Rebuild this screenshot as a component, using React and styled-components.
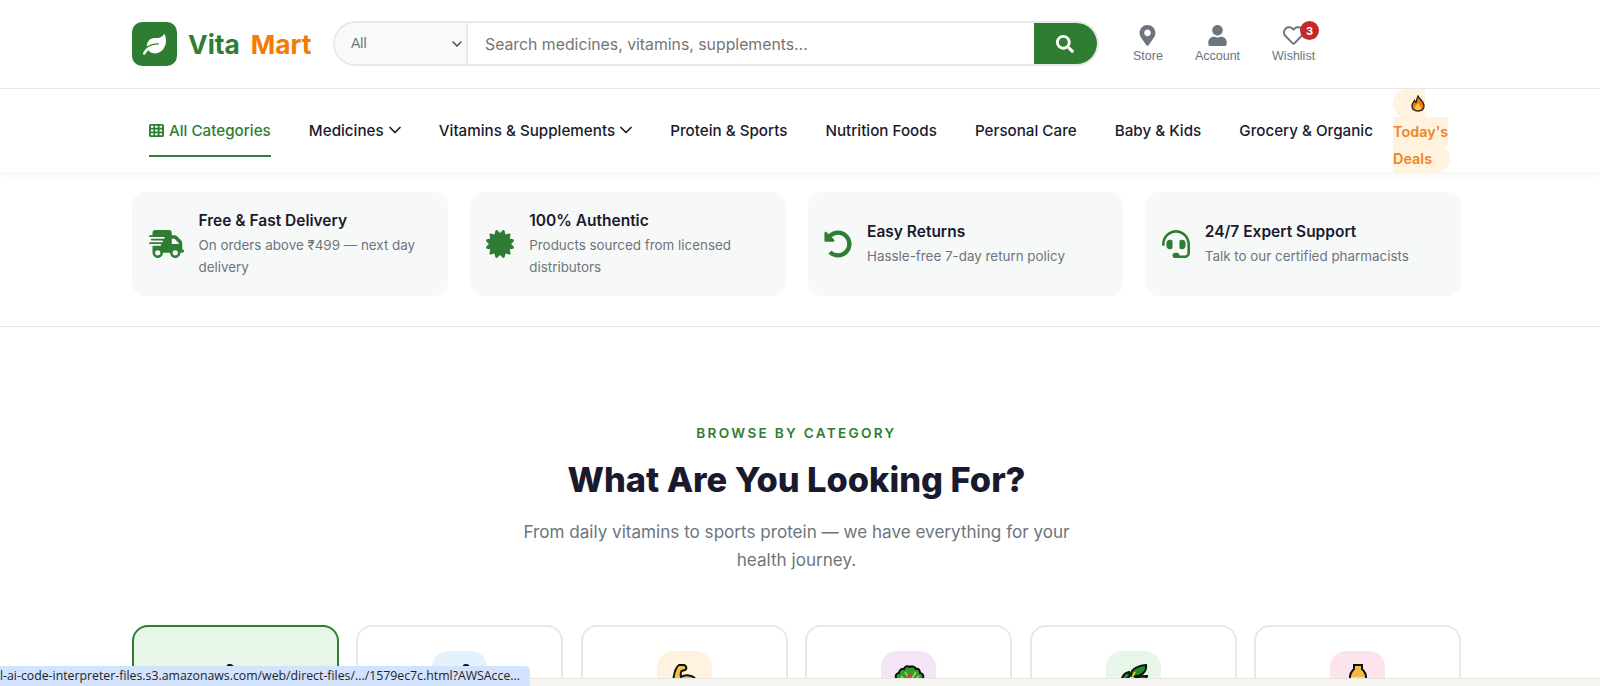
import styled, { createGlobalStyle } from "styled-components"
import { FaLeaf, FaMapMarkerAlt, FaUser, FaRegHeart, FaSearch, FaCertificate, FaUndoAlt, FaHeadset } from "react-icons/fa"
import { FaTruckFast, FaTableCells } from "react-icons/fa6"
import { ChevronDown } from "lucide-react"

const GlobalStyle = createGlobalStyle`
  * {
    box-sizing: border-box;
  }
  html, body {
    margin: 0;
    height: 686px;
    overflow: hidden;
    background: #fff;
    font-family: Inter, "Liberation Sans", sans-serif;
    color: #1a1a2e;
  }
`
const Page = styled.div`
  position: relative;
  height: 686px;
  overflow: hidden;
`
const Header = styled.header`
  position: relative;
  z-index: 1;
  height: 89px;
  background: #fff;
  border-bottom: 1px solid #e8e8e8;
`
const HeaderRow = styled.div`
  display: flex;
  align-items: flex-start;
  width: 1336px;
  margin-left: 132px;
  padding-top: 21px;
`
const Logo = styled.div`
  display: flex;
  align-items: center;
  width: 201px;
  gap: 11px;
  margin-top: 1px;
`
const LogoMark = styled.div`
  width: 45px;
  height: 44px;
  border-radius: 10px;
  background: #2e7d32;
  color: #fff;
  display: flex;
  align-items: center;
  justify-content: center;
  font-size: 23px;
`
const LogoText = styled.div`
  display: flex;
  gap: 11px;
  font-size: 26.3px;
  font-weight: 700;
  color: #2e7d32;
  span:last-child {
    color: #f57c00;
  }
`
const Search = styled.div`
  display: flex;
  width: 766px;
  height: 45px;
  border: 2px solid #e8e8e8;
  border-radius: 24px;
  overflow: hidden;
`
const SearchSelect = styled.div`
  width: 133px;
  background: #f8f9f9;
  border-right: 2px solid #e8e8e8;
  display: flex;
  align-items: center;
  justify-content: space-between;
  padding: 0 1px 2px 16px;
  font-size: 14px;
  color: #6c757d;
  font-family: "Liberation Sans", Arial, sans-serif;
  svg {
    color: #444;
    margin-top: 2px;
  }
`
const SearchInput = styled.div`
  flex: 1;
  display: flex;
  align-items: center;
  padding: 1px 0 0 17px;
  font-size: 15.8px;
  color: #757575;
`
const SearchButton = styled.div`
  width: 65px;
  margin: -2px;
  padding-right: 3px;
  background: #2e7d32;
  color: #fff;
  display: flex;
  align-items: center;
  justify-content: center;
  font-size: 18px;
`
const HeaderActions = styled.div`
  display: flex;
  margin-left: 34px;
  gap: 32px;
`
const Action = styled.div`
  position: relative;
  display: flex;
  flex-direction: column;
  align-items: center;
  gap: 3px;
  font-family: "Liberation Sans", Arial, sans-serif;
  font-size: 12.5px;
  color: #6c757d;
  svg {
    font-size: 21px;
    color: #6c757d;
    margin-top: 4px;
  }
`
const Badge = styled.span`
  position: absolute;
  top: 0;
  right: -4px;
  width: 19px;
  height: 19px;
  border-radius: 50%;
  background: #c62828;
  color: #fff;
  font-size: 11px;
  font-weight: 700;
  display: flex;
  align-items: center;
  justify-content: center;
  font-family: Inter, sans-serif;
`
const Nav = styled.nav`
  height: 83px;
  box-shadow: 0 2px 8px rgba(0, 0, 0, 0.05);
`
const NavRow = styled.div`
  display: flex;
  align-items: center;
  height: 83px;
  margin-left: 149px;
  gap: 38.1px;
`
const NavItem = styled.a`
  display: flex;
  align-items: center;
  gap: 5px;
  height: 52px;
  padding-top: 1px;
  font-size: 15.2px;
  font-weight: 500;
  white-space: nowrap;
  color: ${p => (p.$active ? "#2e7d32" : "#1a1a2e")};
  border-bottom: 2px solid ${p => (p.$active ? "#2e7d32" : "transparent")};
`
const NavChevron = styled(ChevronDown)`
  margin: 0 -4px 0 -4px;
`
const DealsBox = styled.div`
  margin: 2px 0 0 -18px;
  width: 56px;
  flex: none;
  line-height: 27.5px;
  font-size: 14.4px;
  font-weight: 600;
`
const Deals = styled.a`
  padding: 6px 18px;
  color: #ef8522;
  background: #fff3e0;
  border-radius: 20px;
  svg {
    vertical-align: -3px;
  }
`
const Features = styled.section`
  display: grid;
  grid-template-columns: repeat(4, 1fr);
  gap: 22px;
  width: 1329px;
  margin: 20px 0 0 132px;
`
const FeatureCard = styled.div`
  height: 104px;
  background: #f7f9f8;
  border-radius: 14px;
  display: flex;
  align-items: center;
  gap: 15px;
  padding: 0 16.5px;
`
const FeatureIcon = styled.div`
  color: #2e7d32;
  flex: none;
  display: flex;
  svg {
    width: ${p => p.$width}px;
    height: 28px;
  }
`
const FeatureTitle = styled.div`
  font-size: 15.5px;
  font-weight: 600;
  line-height: 22px;
  margin-bottom: 3px;
`
const FeatureText = styled.div`
  font-size: 13.4px;
  line-height: 21.5px;
  color: #6c757d;
`
const Divider = styled.hr`
  margin: 30px 0 0;
  border: 0;
  border-top: 1px solid #e8e8e8;
`
const Section = styled.section`
  width: 1329px;
  margin: 0 0 0 132px;
  padding-top: 96px;
  display: flex;
  flex-direction: column;
  align-items: center;
`
const Eyebrow = styled.div`
  font-size: 13.6px;
  font-weight: 600;
  letter-spacing: 2.3px;
  color: #2e7d32;
  line-height: 20px;
`
const Heading = styled.h2`
  margin: 12px 0 0;
  font-size: 34.4px;
  font-weight: 800;
  line-height: 50px;
`
const Sub = styled.p`
  margin: 13px 0 0;
  width: 580px;
  font-size: 17.1px;
  line-height: 27.5px;
  text-align: center;
  color: #6c757d;
`
const CategoryGrid = styled.div`
  display: grid;
  grid-template-columns: repeat(6, 1fr);
  gap: 17.6px;
  width: 100%;
  margin-top: 52px;
`
const CategoryCard = styled.div`
  height: 120px;
  border: 2px solid ${p => (p.$active ? "#2e7d32" : "#e8e8e8")};
  background: ${p => (p.$active ? "#e8f5e9" : "#fff")};
  border-radius: 16px;
  display: flex;
  justify-content: center;
  padding-top: 24px;
`
const CategoryIcon = styled.div`
  width: 55px;
  height: 55px;
  border-radius: 16px;
  background: ${p => p.$bg};
  display: flex;
  align-items: center;
  justify-content: center;
`
const BrowserBar = styled.div`
  position: absolute;
  left: 0;
  right: 0;
  bottom: 0;
  height: 8px;
  background: #f6f4f0;
  border-top: 1px solid #e8e6e2;
`
const UrlTip = styled.div`
  position: absolute;
  left: 0;
  bottom: 0;
  width: 530px;
  height: 20px;
  padding-right: 10px;
  background: #d3e3fd;
  border-top-right-radius: 5px;
  font-family: "Open Sans", "Liberation Sans", sans-serif;
  font-size: 12.3px;
  line-height: 20px;
  color: #1f1f1f;
  white-space: nowrap;
  display: flex;
  justify-content: flex-end;
`

const Flame = () => (
  <svg width="14" height="17" viewBox="0 0 14 17">
    <path d="M7 1C8 4 13 6 13 11C13 14.500 10.500 16 7 16S1 14.500 1 11C1 8.500 2.500 7 3.500 5.500C4 7 4.500 7.500 5 7.500C5.500 5.500 6 3 7 1Z" fill="#f57c00" stroke="#222" strokeWidth="1.300" />
    <path d="M7 8C8 10 10 11 10 13C10 14.500 8.500 15.200 7 15.200S4 14.500 4 13C4 11 6 10 7 8Z" fill="#ffc83d" />
  </svg>
)

// only the top of each emoji shows above the browser bar
const Pill = () => (
  <svg width="32" height="32" viewBox="0 0 32 32">
    <path d="M5 16C6 3 8 1 10.500 1S16 3 16 6V16Z" fill="#111" />
  </svg>
)
const Info = () => (
  <svg width="32" height="32" viewBox="0 0 32 32">
    <ellipse cx="22" cy="4" rx="3.500" ry="3" fill="#111" />
  </svg>
)
const Arm = () => (
  <svg width="32" height="32" viewBox="0 0 32 32">
    <path d="M5 32C4 20 6 5 11 2H16C19 3 19 6 17 7L13.500 8C12.500 10 12.500 12 13 14C16 12 20 12 23 13C27 14 29 18 29 23V32Z" fill="#f7c23a" stroke="#111" strokeWidth="2" />
  </svg>
)
const Salad = () => (
  <svg width="32" height="32" viewBox="0 0 32 32">
    <path d="M3 15C2 12 4 10 6 10C6 7 9 5 11 6C12 3 15 2.500 17 4C19 2.500 22 4 23 6C25 5 27 7 27 10C29 10 31 12 30 15V32H3Z" fill="#2f9e2f" stroke="#111" strokeWidth="2" />
    <path d="M12 9L15 14M23 9L19 15M8 13L11 16M26 13L23 16" stroke="#9ad854" strokeWidth="1.600" />
    <path d="M16 10L20 12L17 16L14 14Z" fill="#c8492c" />
  </svg>
)
const Herb = () => (
  <svg width="32" height="32" viewBox="0 0 32 32">
    <path d="M5 17C5 13 8 10 12 9C14 13 11 17 5 17Z" fill="#1e8c1e" stroke="#111" strokeWidth="2" />
    <path d="M14 13C13 8 18 3 29 2C30 8 25 15 14 13Z" fill="#1e8c1e" stroke="#111" strokeWidth="2" />
    <path d="M15 18C17 14 23 13 30 13C29 18 22 22 15 18Z" fill="#1e8c1e" stroke="#111" strokeWidth="2" />
    <path d="M10 24L18 9" stroke="#e4d34a" strokeWidth="1.600" />
  </svg>
)
const Bottle = () => (
  <svg width="32" height="32" viewBox="0 0 32 32">
    <path d="M12 2H20V6C22 8 24 10 24 14V30H8V14C8 10 10 8 12 6Z" fill="#f4b942" stroke="#111" strokeWidth="2" />
    <rect x="9" y="14" width="14" height="15" fill="#cfe0ee" />
  </svg>
)

const navItems = [
  { label: "Medicines", chevron: true },
  { label: "Vitamins & Supplements", chevron: true },
  { label: "Protein & Sports" },
  { label: "Nutrition Foods" },
  { label: "Personal Care" },
  { label: "Baby & Kids" },
  { label: "Grocery & Organic" },
]

const features = [
  { icon: <FaTruckFast />, width: 35, title: "Free & Fast Delivery", text: "On orders above ₹499 — next day delivery" },
  { icon: <FaCertificate />, width: 28, title: "100% Authentic", text: "Products sourced from licensed distributors" },
  { icon: <FaUndoAlt />, width: 28, title: "Easy Returns", text: "Hassle-free 7-day return policy" },
  { icon: <FaHeadset />, width: 28, title: "24/7 Expert Support", text: "Talk to our certified pharmacists" },
]

const categories = [
  { bg: "#e8f5e9", icon: <Pill />, active: true },
  { bg: "#e3f2fd", icon: <Info /> },
  { bg: "#fff3e0", icon: <Arm /> },
  { bg: "#f3e5f5", icon: <Salad /> },
  { bg: "#e8f5e9", icon: <Herb /> },
  { bg: "#fce4ec", icon: <Bottle /> },
]

export default function App() {
  return (
    <Page>
      <GlobalStyle />
      <Header>
        <HeaderRow>
          <Logo>
            <LogoMark><FaLeaf /></LogoMark>
            <LogoText><span>Vita</span><span>Mart</span></LogoText>
          </Logo>
          <Search>
            <SearchSelect>All <ChevronDown size={16} /></SearchSelect>
            <SearchInput>Search medicines, vitamins, supplements...</SearchInput>
            <SearchButton><FaSearch /></SearchButton>
          </Search>
          <HeaderActions>
            <Action><FaMapMarkerAlt />Store</Action>
            <Action><FaUser />Account</Action>
            <Action><FaRegHeart />Wishlist<Badge>3</Badge></Action>
          </HeaderActions>
        </HeaderRow>
      </Header>
      <Nav>
        <NavRow>
          <NavItem $active><FaTableCells size={15} />All Categories</NavItem>
          {navItems.map(item => (
            <NavItem key={item.label}>
              {item.label}
              {item.chevron && <NavChevron size={20} />}
            </NavItem>
          ))}
          <DealsBox>
            <Deals><Flame /> Today's Deals</Deals>
          </DealsBox>
        </NavRow>
      </Nav>
      <Features>
        {features.map(f => (
          <FeatureCard key={f.title}>
            <FeatureIcon $width={f.width}>{f.icon}</FeatureIcon>
            <div>
              <FeatureTitle>{f.title}</FeatureTitle>
              <FeatureText>{f.text}</FeatureText>
            </div>
          </FeatureCard>
        ))}
      </Features>
      <Divider />
      <Section>
        <Eyebrow>BROWSE BY CATEGORY</Eyebrow>
        <Heading>What Are You Looking For?</Heading>
        <Sub>From daily vitamins to sports protein — we have everything for your health journey.</Sub>
        <CategoryGrid>
          {categories.map((c, i) => (
            <CategoryCard key={i} $active={c.active}>
              <CategoryIcon $bg={c.bg}>{c.icon}</CategoryIcon>
            </CategoryCard>
          ))}
        </CategoryGrid>
      </Section>
      <BrowserBar />
      <UrlTip>l-ai-code-interpreter-files.s3.amazonaws.com/web/direct-files/.../1579ec7c.html?AWSAcce...</UrlTip>
    </Page>
  )
}
